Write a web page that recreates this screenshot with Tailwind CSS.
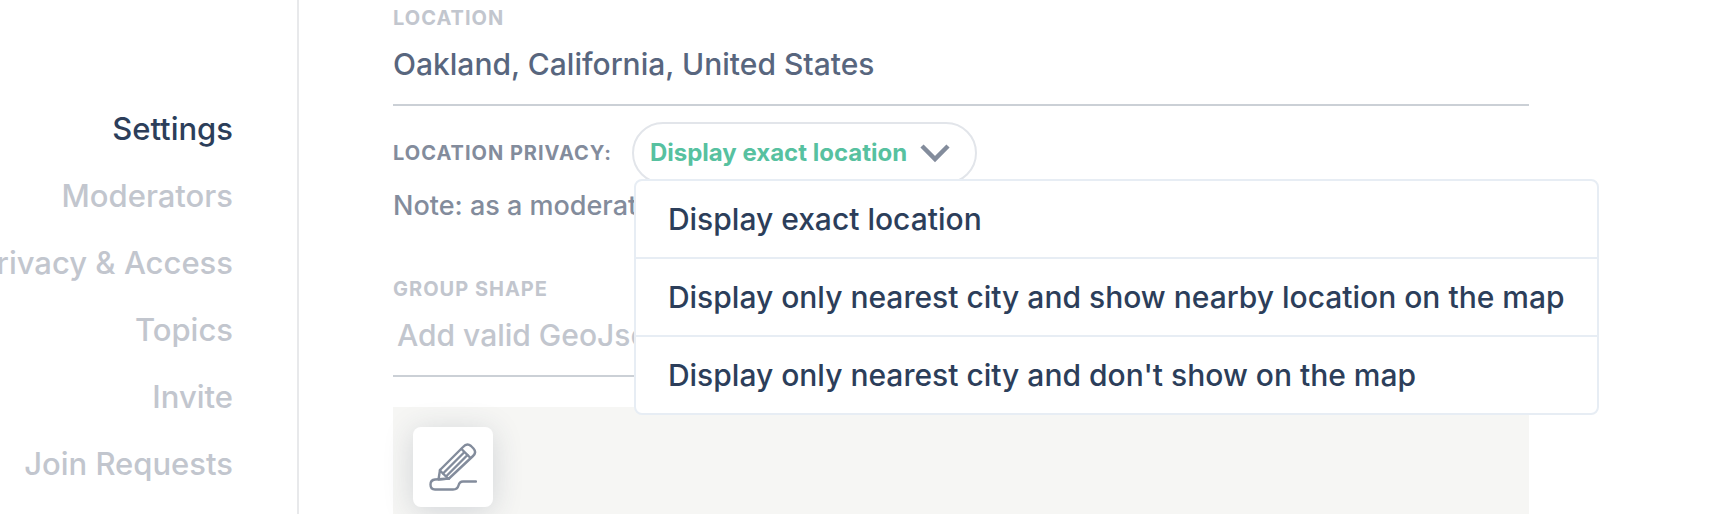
<!DOCTYPE html>
<html lang="en">
  <head>
    <meta charset="UTF-8" />
    <meta name="viewport" content="width=device-width, initial-scale=1.0" />
    <title>Group Settings</title>
    <script src="https://cdn.jsdelivr.net/npm/@tailwindcss/browser@4"></script>
  </head>
  <body class="bg-white font-['Inter','Liberation_Sans',sans-serif] text-[#2c3e5a]">
    <div class="flex h-screen overflow-hidden">
      <!-- Sidebar -->
      <nav class="w-[299px] shrink-0 border-r-2 border-[#e8e9eb] pt-[95px] pr-16" aria-label="Group settings">
        <ul class="flex flex-col items-end text-[31px] leading-[67px] font-medium whitespace-nowrap text-[#c2c6ce]">
          <li><a href="#settings" class="text-[#2c3e5a]" aria-current="page">Settings</a></li>
          <li><a href="#moderators">Moderators</a></li>
          <li><a href="#privacy">Privacy &amp; Access</a></li>
          <li><a href="#topics">Topics</a></li>
          <li><a href="#invite">Invite</a></li>
          <li><a href="#requests">Join Requests</a></li>
        </ul>
      </nav>

      <!-- Settings form -->
      <main class="flex min-w-0 grow flex-col pt-0.5 pr-[189px] pl-[94px]">
        <label for="location" class="text-[20px] leading-8 font-bold tracking-wider text-[#c2c6ce] uppercase">Location</label>
        <input id="location" type="text" value="Oakland, California, United States" class="h-[72px] w-full shrink-0 border-b-2 border-[#cbd0d6] pb-2.5 text-[30px] font-medium text-[#58667e] outline-none" />

        <div class="mt-4 flex items-center gap-5">
          <span id="privacy-label" class="text-[20px] leading-8 font-bold tracking-wider text-[#838c9c] uppercase">Location privacy:</span>
          <div class="relative">
            <button type="button" aria-haspopup="listbox" aria-expanded="true" aria-labelledby="privacy-label" class="flex h-[62px] items-center gap-3 rounded-full border-2 border-[#e2e5ea] pr-6 pl-4 text-[24px] font-bold whitespace-nowrap text-[#57c1a0]">
              Display exact location
              <svg class="h-5 w-8" viewBox="0 0 32 20" fill="none" stroke="#838c9c" stroke-width="4.500" aria-hidden="true">
                <path d="M3 3l13 13L29 3" />
              </svg>
            </button>
            <ul role="listbox" aria-labelledby="privacy-label" class="absolute top-[57px] left-0.5 z-10 w-max divide-y-2 divide-[#e7edf4] rounded-lg border-2 border-[#e7edf4] bg-white text-[30px] leading-[76px] font-medium">
              <li role="option" aria-selected="true" class="px-8">Display exact location</li>
              <li role="option" aria-selected="false" class="px-8">Display only nearest city and show nearby location on the map</li>
              <li role="option" aria-selected="false" class="px-8">Display only nearest city and don't show on the map</li>
            </ul>
          </div>
        </div>
        <p class="text-[27px] leading-11 font-medium text-[#838c9c]">Note: as a moderator</p>

        <label for="shape" class="mt-[45px] text-[20px] leading-8 font-bold tracking-wider text-[#c2c6ce] uppercase">Group shape</label>
        <input id="shape" type="text" placeholder="Add valid GeoJson" class="h-[72px] w-full shrink-0 border-b-2 border-[#cbd0d6] pb-2.5 pl-1 text-[30px] font-medium outline-none placeholder:text-[#c2c6ce]" />

        <!-- Map -->
        <div class="mt-[30px] grow bg-[#f6f6f4] p-5">
          <button type="button" aria-label="Draw shape" class="flex size-20 items-center justify-center rounded-lg bg-white shadow-[0_4px_30px_rgba(44,62,90,0.18)]">
            <svg class="size-12" viewBox="0 0 48 48" fill="none" stroke="#838c9c" stroke-width="2.400" stroke-linecap="round" stroke-linejoin="round" aria-hidden="true">
              <path d="M11 27L34 4Q38 -0.500 42 3L44.500 5.500Q48 9.500 44 13L20 35.500" />
              <path d="M32.500 6L41.500 15" />
              <path d="M14 30.500L35 9.500M17.500 33L38.500 12" />
              <path d="M11 27L9.500 36.500L20 35.500M11.500 28L18.500 35" />
              <path d="M20 35.500L6 36.500Q1.500 37 1.500 41.500Q1.500 46.500 6 46.500H24Q28.500 46.500 29.500 42.500Q30.500 38.500 34 38.500H47" />
            </svg>
          </button>
        </div>
      </main>
    </div>
  </body>
</html>
